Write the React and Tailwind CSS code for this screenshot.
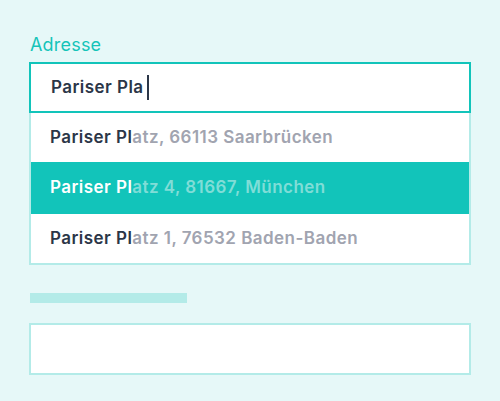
import React from 'react';

const options = [
  { rest: 'atz, 66113 Saarbrücken' },
  { rest: 'atz 4, 81667, München', active: true },
  { rest: 'atz 1, 76532 Baden-Baden' },
];

const App = () => {
  return (
    <div className="h-[401px] w-[500px] bg-[#e6f8f8] pt-[33px] pl-[29px] font-['Inter',sans-serif]">
      <div className="w-[442px]">
        <label className="block pl-px text-[18px] leading-[24px] tracking-[0.2px] text-[#14c4b9]">Adresse</label>

        <div className="mt-[5px] flex h-[51px] items-center border-2 border-[#12c4ba] bg-white pl-[20px]">
          <span className="text-[17px] font-semibold tracking-[0.45px] text-[#2b3648]">Pariser Pla</span>
          <span className="ml-[3px] h-[25px] w-[2px] bg-[#2b3648]"></span>
        </div>

        {/* suggestions */}
        <div className="border-2 border-t-0 border-[#b3ebe8] bg-white">
          {options.map((o, i) => (
            <div
              key={i}
              className={`flex items-center pl-[19px] text-[17px] font-semibold tracking-[0.45px] ${
                o.active ? 'h-[52px] bg-[#12c4ba]' : 'h-[49px]'
              }`}
            >
              <span className={o.active ? 'text-white' : 'text-[#2b3648]'}>Pariser Pl</span>
              <span className={o.active ? 'text-[#80ddd7]' : 'text-[#a1a4b0]'}>{o.rest}</span>
            </div>
          ))}
        </div>

        <div className="mt-[28px] ml-px h-[10px] w-[157px] bg-[#b3ebe8]"></div>

        <div className="mt-[20px] h-[52px] border-2 border-[#b3ebe8] bg-white"></div>
      </div>
    </div>
  );
};

export default App;
